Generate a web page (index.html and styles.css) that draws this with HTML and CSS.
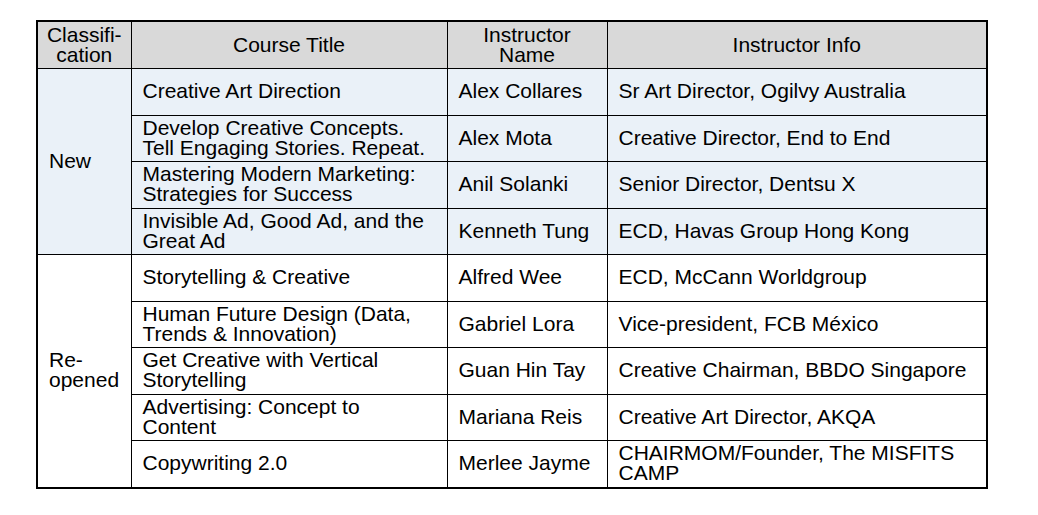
FILE: index.html
```html
<!DOCTYPE html>
<html lang="en">
<head>
<meta charset="utf-8">
<title>Courses</title>
<link rel="stylesheet" href="styles.css">
</head>
<body>
<div class="page">
<table class="courses">
<colgroup>
<col class="c-class">
<col class="c-title">
<col class="c-name">
<col class="c-info">
</colgroup>
<thead>
<tr>
<th>Classifi-<br>cation</th>
<th>Course Title</th>
<th>Instructor<br>Name</th>
<th>Instructor Info</th>
</tr>
</thead>
<tbody class="new">
<tr>
<td class="group" rowspan="4">New</td>
<td>Creative Art Direction</td>
<td>Alex Collares</td>
<td>Sr Art Director, Ogilvy Australia</td>
</tr>
<tr>
<td>Develop Creative Concepts.<br>Tell Engaging Stories. Repeat.</td>
<td>Alex Mota</td>
<td>Creative Director, End to End</td>
</tr>
<tr>
<td>Mastering Modern Marketing:<br>Strategies for Success</td>
<td>Anil Solanki</td>
<td>Senior Director, Dentsu X</td>
</tr>
<tr>
<td>Invisible Ad, Good Ad, and the<br>Great Ad</td>
<td>Kenneth Tung</td>
<td>ECD, Havas Group Hong Kong</td>
</tr>
</tbody>
<tbody class="reopened">
<tr>
<td class="group" rowspan="5">Re-<br>opened</td>
<td>Storytelling &amp; Creative</td>
<td>Alfred Wee</td>
<td>ECD, McCann Worldgroup</td>
</tr>
<tr>
<td>Human Future Design (Data,<br>Trends &amp; Innovation)</td>
<td>Gabriel Lora</td>
<td>Vice-president, FCB México</td>
</tr>
<tr>
<td>Get Creative with Vertical<br>Storytelling</td>
<td>Guan Hin Tay</td>
<td>Creative Chairman, BBDO Singapore</td>
</tr>
<tr>
<td>Advertising: Concept to<br>Content</td>
<td>Mariana Reis</td>
<td>Creative Art Director, AKQA</td>
</tr>
<tr>
<td>Copywriting 2.0</td>
<td>Merlee Jayme</td>
<td>CHAIRMOM/Founder, The MISFITS<br>CAMP</td>
</tr>
</tbody>
</table>
</div>
</body>
</html>
```

FILE: styles.css
```css
html, body {
  margin: 0;
  padding: 0;
  background: #ffffff;
}

.page {
  padding: 20px 0 0 36px;
}

.courses {
  border-collapse: collapse;
  table-layout: fixed;
  width: 950px;
  border: 2px solid #000;
  font-family: "Liberation Sans", Arial, Helvetica, sans-serif;
  font-size: 21px;
  line-height: 20px;
  color: #000;
}

.c-class { width: 94px; }
.c-title { width: 316px; }
.c-name { width: 160px; }
.c-info { width: 380px; }

.courses th,
.courses td {
  border: 1px solid #000;
  padding: 0 8px 0 11px;
  vertical-align: middle;
  text-align: left;
}

.courses th {
  background: #d9d9d9;
  font-weight: normal;
  text-align: center;
  height: 46px;
  padding: 0 4px;
}

.courses tbody td {
  height: 44.5px;
  padding-bottom: 1px;
}

.courses tbody.new td {
  background: #eaf1f8;
}

.courses tbody.reopened td {
  background: #ffffff;
}
```
